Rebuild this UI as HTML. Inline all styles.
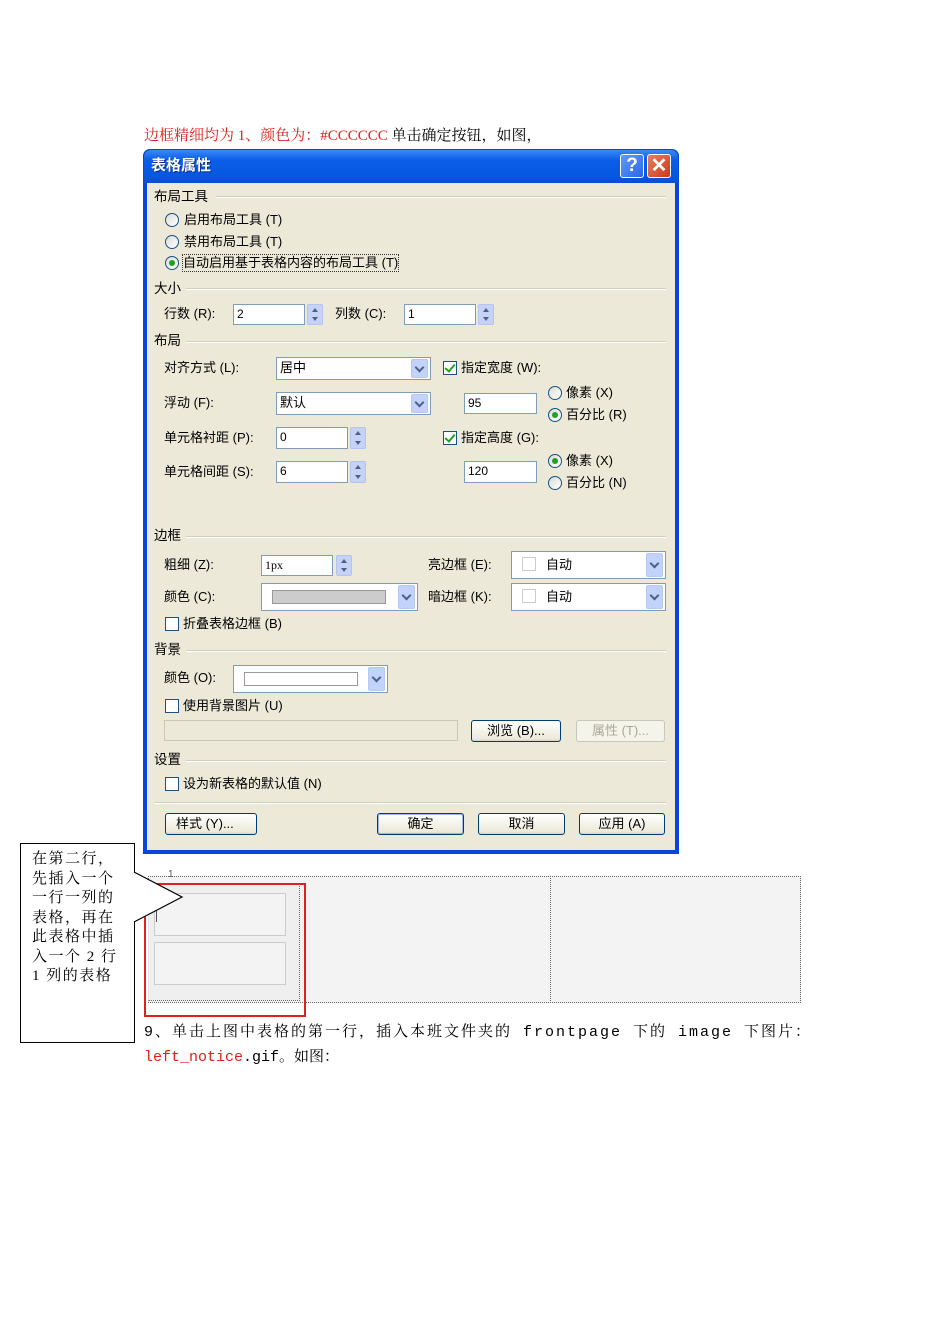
<!DOCTYPE html>
<html><head><meta charset="utf-8">
<style>
*{margin:0;padding:0;box-sizing:border-box}
body{width:950px;height:1344px;background:#fff;position:relative;overflow:hidden;font-family:"Liberation Sans","Noto Sans CJK SC",sans-serif}
.a{position:absolute}
.t{position:absolute;font-size:13px;color:#000;white-space:nowrap;line-height:16px;transform:translateY(-8px)}
.sec{position:absolute;left:154px;font-size:13.5px;line-height:16px;transform:translateY(-8px);white-space:nowrap}
.ln{position:absolute;height:2px;border-top:1px solid #d0d0bf;border-bottom:1px solid #fff;right:12px}
.radio{position:absolute;width:14px;height:14px;border-radius:50%;border:1px solid #1c5180;background:linear-gradient(135deg,#dcdcd6,#fff);transform:translateY(-7px)}
.radio.on::after{content:"";position:absolute;left:3px;top:3px;width:6px;height:6px;border-radius:50%;background:#21a121}
.cb{position:absolute;width:14px;height:14px;border:1px solid #1c5180;background:#fff;transform:translateY(-7px)}
.cb.on::after{content:"";position:absolute;left:3px;top:0px;width:4px;height:8px;border:solid #21a121;border-width:0 2px 2px 0;transform:rotate(40deg)}
.inp{position:absolute;background:#fff;border:1px solid #7f9db9;font-size:12px;padding-left:3px;line-height:19px}
.spin{position:absolute;width:16px;background:#c6d3f7;border:1px solid #b3c4ee;border-radius:2px}
.spin::before{content:"";position:absolute;left:4px;top:3px;border:3px solid transparent;border-bottom:4px solid #4d6185;border-top:0}
.spin::after{content:"";position:absolute;left:4px;bottom:3px;border:3px solid transparent;border-top:4px solid #4d6185;border-bottom:0}
.dd{position:absolute;width:17px;background:#c1d3fb;border:1px solid #b7c9f3;border-radius:2px}
.dd::after{content:"";position:absolute;left:4px;top:50%;width:5px;height:5px;border:solid #4d6185;border-width:0 2px 2px 0;transform:translateY(-5px) rotate(45deg)}
.btn{position:absolute;height:22px;border:1px solid #003c74;border-radius:3px;background:linear-gradient(#fff,#ece9d8 90%,#d6d0c5);font-size:13px;text-align:center;line-height:20px}
</style></head><body>

<div class="a" style="left:144px;top:127px;font-size:15px;font-family:'Liberation Serif','Noto Serif CJK SC',serif;white-space:nowrap;line-height:18px"><span style="color:#e0201c">边框精细均为 1、颜色为：#CCCCCC</span> 单击确定按钮，如图，</div>

<!-- dialog -->
<div class="a" style="left:143px;top:149px;width:536px;height:705px;background:#0846d8;border-radius:7px 7px 0 0"></div>
<div class="a" style="left:144px;top:150px;width:534px;height:33px;border-radius:7px 7px 0 0;background:linear-gradient(#3b8af5,#0b5ee8 30%,#0656e0 80%,#0a4fcf)"></div>
<div class="a" style="left:151px;top:157px;color:#fff;font-weight:bold;font-size:15px;line-height:18px;font-family:'Liberation Sans','Noto Sans CJK SC',sans-serif;text-shadow:1px 1px #0b2e8a">表格属性</div>
<div class="a" style="left:620px;top:154px;width:24px;height:24px;border:1px solid #fff;border-radius:3px;background:linear-gradient(135deg,#5f9bfb,#2a66e6);color:#fff;font-size:19px;font-weight:bold;text-align:center;line-height:22px">?</div>
<div class="a" style="left:647px;top:154px;width:24px;height:24px;border:1px solid #fff;border-radius:3px;background:linear-gradient(135deg,#e9805c,#c9391a);color:#fff;font-size:20px;font-weight:bold;text-align:center;line-height:22px">✕</div>
<div class="a" style="left:147px;top:183px;width:528px;height:667px;background:#ece9d8"></div>

<div class="sec" style="top:197px">布局工具</div><div class="ln" style="left:216px;top:196px;width:450px"></div>
<div class="radio" style="left:165px;top:220px"></div><div class="t" style="left:184px;top:220px">启用布局工具 (T)</div>
<div class="radio" style="left:165px;top:242px"></div><div class="t" style="left:184px;top:242px">禁用布局工具 (T)</div>
<div class="radio on" style="left:165px;top:263px"></div><div class="t" style="left:183px;top:263px;outline:1px dotted #333">自动启用基于表格内容的布局工具 (T)</div>

<div class="sec" style="top:289px">大小</div><div class="ln" style="left:186px;top:288px;width:480px"></div>
<div class="t" style="left:164px;top:314px">行数 (R):</div>
<div class="inp" style="left:233px;top:304px;width:72px;height:21px">2</div><div class="spin" style="left:307px;top:304px;height:21px"></div>
<div class="t" style="left:335px;top:314px">列数 (C):</div>
<div class="inp" style="left:404px;top:304px;width:72px;height:21px">1</div><div class="spin" style="left:478px;top:304px;height:21px"></div>

<div class="sec" style="top:341px">布局</div><div class="ln" style="left:186px;top:341px;width:480px"></div>
<div class="t" style="left:164px;top:368px">对齐方式 (L):</div>
<div class="inp" style="left:276px;top:357px;width:155px;height:23px;font-size:13px">居中</div><div class="dd" style="left:411px;top:359px;height:19px"></div>
<div class="cb on" style="left:443px;top:368px"></div><div class="t" style="left:461px;top:368px">指定宽度 (W):</div>
<div class="t" style="left:164px;top:403px">浮动 (F):</div>
<div class="inp" style="left:276px;top:392px;width:155px;height:23px;font-size:13px">默认</div><div class="dd" style="left:411px;top:394px;height:19px"></div>
<div class="inp" style="left:464px;top:393px;width:73px;height:21px">95</div>
<div class="radio" style="left:548px;top:393px"></div><div class="t" style="left:566px;top:393px">像素 (X)</div>
<div class="radio on" style="left:548px;top:415px"></div><div class="t" style="left:566px;top:415px">百分比 (R)</div>
<div class="t" style="left:164px;top:438px">单元格衬距 (P):</div>
<div class="inp" style="left:276px;top:427px;width:72px;height:22px">0</div><div class="spin" style="left:350px;top:427px;height:22px"></div>
<div class="cb on" style="left:443px;top:438px"></div><div class="t" style="left:461px;top:438px">指定高度 (G):</div>
<div class="t" style="left:164px;top:472px">单元格间距 (S):</div>
<div class="inp" style="left:276px;top:461px;width:72px;height:22px">6</div><div class="spin" style="left:350px;top:461px;height:22px"></div>
<div class="inp" style="left:464px;top:461px;width:73px;height:22px">120</div>
<div class="radio on" style="left:548px;top:461px"></div><div class="t" style="left:566px;top:461px">像素 (X)</div>
<div class="radio" style="left:548px;top:483px"></div><div class="t" style="left:566px;top:483px">百分比 (N)</div>

<div class="sec" style="top:536px">边框</div><div class="ln" style="left:186px;top:536px;width:480px"></div>
<div class="t" style="left:164px;top:565px">粗细 (Z):</div>
<div class="inp" style="left:261px;top:555px;width:72px;height:21px;font-family:'Liberation Serif',serif">1px</div><div class="spin" style="left:336px;top:555px;height:21px"></div>
<div class="t" style="left:428px;top:565px">亮边框 (E):</div>
<div class="inp" style="left:511px;top:551px;width:155px;height:28px;padding-left:10px;font-size:13px;line-height:26px"><span style="display:inline-block;width:14px;height:14px;border:1px solid #ccc;vertical-align:-2px;margin-right:10px"></span>自动</div><div class="dd" style="left:646px;top:553px;height:24px"></div>
<div class="t" style="left:164px;top:597px">颜色 (C):</div>
<div class="inp" style="left:261px;top:583px;width:157px;height:28px"></div><div class="a" style="left:272px;top:590px;width:114px;height:14px;background:#ccc;border:1px solid #999"></div><div class="dd" style="left:398px;top:585px;height:24px"></div>
<div class="t" style="left:428px;top:597px">暗边框 (K):</div>
<div class="inp" style="left:511px;top:583px;width:155px;height:28px;padding-left:10px;font-size:13px;line-height:26px"><span style="display:inline-block;width:14px;height:14px;border:1px solid #ccc;vertical-align:-2px;margin-right:10px"></span>自动</div><div class="dd" style="left:646px;top:585px;height:24px"></div>
<div class="cb" style="left:165px;top:624px"></div><div class="t" style="left:183px;top:624px">折叠表格边框 (B)</div>

<div class="sec" style="top:650px">背景</div><div class="ln" style="left:186px;top:650px;width:480px"></div>
<div class="t" style="left:164px;top:678px">颜色 (O):</div>
<div class="inp" style="left:233px;top:665px;width:155px;height:28px"></div><div class="a" style="left:244px;top:672px;width:114px;height:14px;background:#fff;border:1px solid #999"></div><div class="dd" style="left:368px;top:667px;height:24px"></div>
<div class="cb" style="left:165px;top:706px"></div><div class="t" style="left:183px;top:706px">使用背景图片 (U)</div>
<div class="a" style="left:164px;top:720px;width:294px;height:21px;border:1px solid #c9c7ba;background:#ece9d8"></div>
<div class="btn" style="left:471px;top:720px;width:90px">浏览 (B)...</div>
<div class="btn" style="left:576px;top:720px;width:89px;border-color:#c9c7ba;color:#aca899;background:#f5f4ea">属性 (T)...</div>

<div class="sec" style="top:760px">设置</div><div class="ln" style="left:186px;top:760px;width:480px"></div>
<div class="cb" style="left:165px;top:784px"></div><div class="t" style="left:183px;top:784px">设为新表格的默认值 (N)</div>
<div class="ln" style="left:154px;top:802px;width:512px"></div>
<div class="btn" style="left:165px;top:813px;width:92px;text-align:left;padding-left:10px">样式 (Y)...</div>
<div class="btn" style="left:377px;top:813px;width:87px;box-shadow:inset 0 0 0 1px #9db9eb">确定</div>
<div class="btn" style="left:478px;top:813px;width:87px">取消</div>
<div class="btn" style="left:579px;top:813px;width:86px">应用 (A)</div>

<!-- table area -->
<div class="a" style="left:148px;top:876px;width:653px;height:127px;background:#f3f3f3;border:1px dotted #666"></div>
<div class="a" style="left:550px;top:876px;height:127px;border-left:1px dotted #666"></div>
<div class="a" style="left:148px;top:883px;width:152px;height:118px;background:#efefef;border:1px solid #ddd;border-bottom:1px dotted #666;border-right:1px dotted #666"></div>
<div class="a" style="left:154px;top:893px;width:132px;height:43px;border:1px solid #ccc;background:#f3f3f3"></div>
<div class="a" style="left:154px;top:942px;width:132px;height:43px;border:1px solid #ccc;background:#f3f3f3"></div>
<div class="a" style="left:156px;top:910px;width:1px;height:12px;background:#555"></div>
<div class="a" style="left:168px;top:869px;font-size:10px;color:#555">1</div>
<div class="a" style="left:144px;top:883px;width:162px;height:134px;border:2px solid #e02020"></div>

<!-- callout -->
<div class="a" style="left:20px;top:843px;width:115px;height:200px;border:1px solid #000;background:#fff"></div>
<svg class="a" style="left:120px;top:860px" width="70" height="80"><polygon points="14,12 62,37 14,62" fill="#fff"/><polyline points="14,12 62,37 14,62" fill="none" stroke="#000" stroke-width="1.2"/></svg>
<div class="a" style="left:32px;top:850px;width:110px;font-size:15px;line-height:19.5px;font-family:'Liberation Serif','Noto Serif CJK SC',serif;letter-spacing:1.5px;white-space:nowrap">在第二行，<br>先插入一个<br>一行一列的<br>表格，再在<br>此表格中插<br>入一个 2 行<br>1 列的表格</div>

<div class="a" style="left:144px;top:1024px;font-size:15px;font-family:'Liberation Mono','Noto Serif CJK SC',monospace;white-space:nowrap;line-height:18px;letter-spacing:2px">9、单击上图中表格的第一行，插入本班文件夹的 frontpage 下的 image 下图片：</div>
<div class="a" style="left:144px;top:1049px;font-size:15px;font-family:'Liberation Mono','Noto Serif CJK SC',monospace;white-space:nowrap;line-height:18px"><span style="color:#e0201c">left_notice</span>.gif。如图：</div>
</body></html>
